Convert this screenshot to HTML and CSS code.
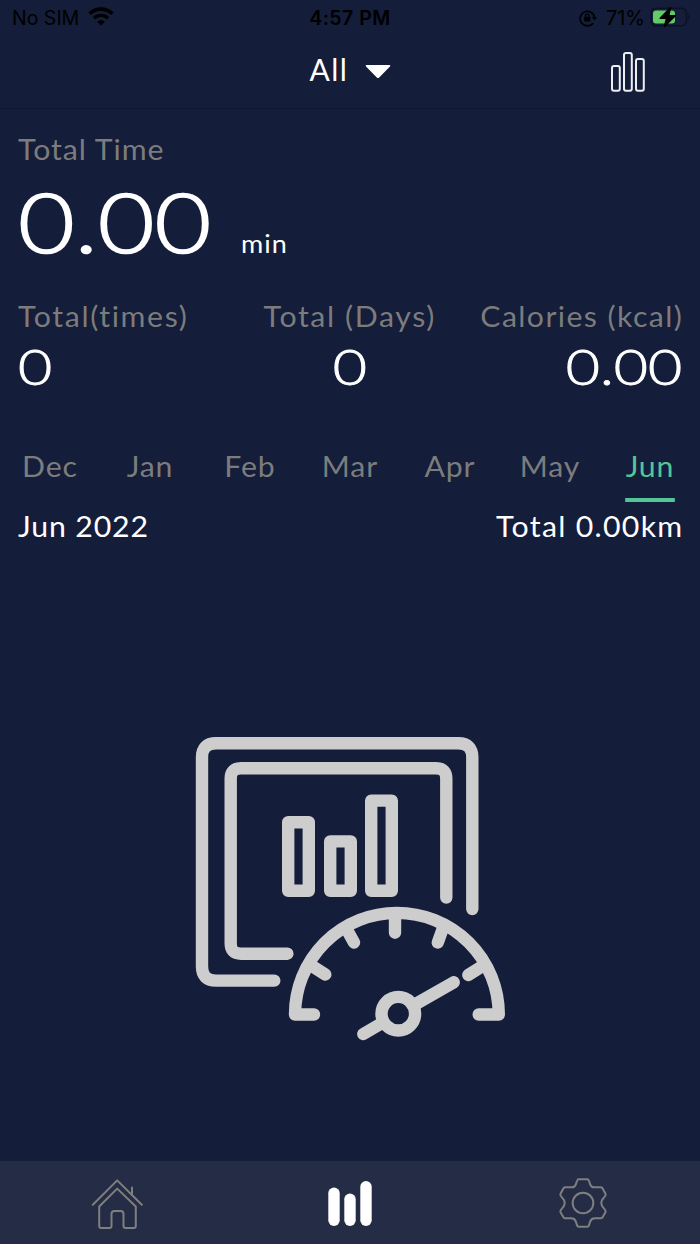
FILE: index.html
```html
<!DOCTYPE html>
<html lang="en">
<head>
    <meta charset="UTF-8">
    <meta name="viewport" content="width=device-width, initial-scale=1.0">
    <title>Workout Statistics</title>
    <link rel="stylesheet" href="styles.css">
</head>
<body>

    <div class="status-bar">
        <div class="status-left">
            <span class="carrier">No SIM</span>
            <svg class="wifi" width="26" height="19" viewBox="0 0 26 19">
                <path d="M1.6 6.8 C8 .6 18 .6 24.4 6.8" fill="none" stroke="#000" stroke-width="3.6"/>
                <path d="M6 11.2 C10 7.4 16 7.4 20 11.2" fill="none" stroke="#000" stroke-width="3.4"/>
                <path d="M9.2 14.8 C11.2 12.8 14.8 12.8 16.8 14.8 L13 18.6 Z"/>
            </svg>
        </div>
        <div class="clock">4:57 PM</div>
        <div class="status-right">
            <svg class="lock" width="18" height="18" viewBox="0 0 18 18">
                <path d="M14.2 14 A7.3 7.3 0 1 1 15.6 8.5" fill="none" stroke="#000" stroke-width="1.6"/>
                <path d="M12.8 8 H18 L15.5 11.6 Z"/>
                <rect x="5.2" y="7.8" width="6.2" height="4.8" rx="1"/>
                <path d="M6.5 8.5 V6.6 a1.8 1.8 0 0 1 3.6 0 V8.5" fill="none" stroke="#000" stroke-width="1.2"/>
            </svg>
            <span class="percent">71%</span>
            <svg class="battery" width="41" height="20" viewBox="0 0 41 20">
                <rect x="1" y="1.2" width="35.5" height="17.6" rx="5" fill="none" stroke="#0c1224" stroke-width="1.6"/>
                <path d="M38.4 7 q2.6 3 0 6 Z" fill="#0c1224"/>
                <rect x="3" y="3.4" width="22" height="13.2" rx="3" fill="#62cb66"/>
                <path d="M20.5 .6 L10.2 11.2 H16.5 L14.4 19.4 L25.4 8.8 H18.8 Z" stroke="#000" stroke-width="1.4" stroke-linejoin="round"/>
            </svg>
        </div>
    </div>

    <header class="header">
        <div class="filter">
            <span>All</span>
            <svg class="caret" width="26" height="14" viewBox="0 0 26 14"><path d="M1.5 0 H24.5 Q26 .4 25 1.6 L14.2 12.4 Q13 13.6 11.8 12.4 L1 1.6 Q0 .4 1.5 0 Z"/></svg>
        </div>
        <svg class="chart-button" width="36" height="42" viewBox="0 0 36 42">
            <rect x="2" y="15" width="7.8" height="24.8" rx="2"/>
            <rect x="14" y="2" width="7.8" height="37.8" rx="2"/>
            <rect x="26" y="8" width="7.8" height="31.8" rx="2"/>
        </svg>
    </header>

    <main>
        <section class="summary">
            <div class="label total-time">Total Time</div>
            <div class="time-row">
                <span class="time">0.00</span>
                <span class="unit">min</span>
            </div>
            <div class="stats">
                <div class="stat">
                    <div class="label">Total(times)</div>
                    <div class="value">0</div>
                </div>
                <div class="stat center">
                    <div class="label">Total (Days)</div>
                    <div class="value">0</div>
                </div>
                <div class="stat right">
                    <div class="label">Calories (kcal)</div>
                    <div class="value">0.00</div>
                </div>
            </div>
        </section>

        <nav class="months">
            <div class="month"><span>Dec</span></div>
            <div class="month"><span>Jan</span></div>
            <div class="month"><span>Feb</span></div>
            <div class="month"><span>Mar</span></div>
            <div class="month"><span>Apr</span></div>
            <div class="month"><span>May</span></div>
            <div class="month active"><span>Jun</span></div>
        </nav>

        <div class="month-total">
            <span class="month-name">Jun 2022</span>
            <span class="distance">Total 0.00km</span>
        </div>

        <div class="empty">
            <svg width="320" height="320" viewBox="190 730 320 320">
                <!-- screen -->
                <path d="M274.3 980.6 H216 Q202 980.6 202 966.6 V757.3 Q202 743.3 216 743.3 H458.3 Q472.3 743.3 472.3 757.3 V909"/>
                <path d="M287.4 953.7 H241 Q230.7 953.7 230.7 943.4 V778.6 Q230.7 768.3 241 768.3 H436 Q446.3 768.3 446.3 778.6 V897.5"/>
                <!-- bars -->
                <rect x="288.2" y="822.2" width="20.6" height="68.6"/>
                <rect x="330.2" y="841.4" width="20.6" height="49.4"/>
                <rect x="371.2" y="800.6" width="20.6" height="90.2"/>
                <!-- gauge -->
                <path d="M314 1014.5 H295 A101.9 101.7 0 0 1 498.8 1014.5 H478.7"/>
                <path d="M395 915 V932.7 M346 928 L354 942.5 M443 928 L437.8 942.5 M312 966 L325.3 974.5 M481 967 L468.3 975"/>
                <circle cx="398.3" cy="1013.7" r="16.8"/>
                <path d="M363.3 1034 L383 1022.5 M414 1005 L453.7 982.3"/>
            </svg>
        </div>
    </main>

    <nav class="tab-bar">
        <div class="tab">
            <svg class="line-icon" width="52" height="52" viewBox="0 0 52 52">
                <path d="M1.8 27.7 L26.2 3.4 L50.8 27.7"/>
                <path d="M41 18 V10.5"/>
                <path d="M8.2 29.5 L26.2 11.6 L44.8 29.5 V49 Q44.8 51 42.8 51 H34.5 Q32.5 51 32.5 49 V37 Q32.5 34 29.5 34 H23.5 Q20.5 34 20.5 37 V49 Q20.5 51 18.5 51 H10.2 Q8.2 51 8.2 49 Z"/>
            </svg>
        </div>
        <div class="tab">
            <svg class="bars" width="44" height="46" viewBox="0 0 44 46">
                <rect x="0.3" y="6.5" width="11.4" height="38.5" rx="5.7"/>
                <rect x="16.3" y="12.5" width="11.4" height="32.5" rx="5.7"/>
                <rect x="32.3" y="0" width="11.4" height="45" rx="5.7"/>
            </svg>
        </div>
        <div class="tab">
            <svg class="line-icon gear" width="50" height="50" viewBox="54.5 85 150 150">
                <path d="M117 89 H142 Q146 89 147.5 94 L151 104 Q154 113 163 113 H182 Q186 113 188 116 L197 132 Q198 136 196 139 L188 149 Q181 160 188 171 L196 181 Q198 184 197 188 L188 203 Q186 206 182 206 H165 Q154 206 151 216 L147 228 Q146 231 142 231 H117 Q113 231 112 228 L108 216 Q105 206 94 206 H77 Q73 206 71 203 L62 188 Q61 184 63 181 L71 171 Q78 160 71 149 L63 139 Q61 136 62 132 L71 116 Q73 113 77 113 H96 Q105 113 108 104 L111.5 94 Q113 89 117 89 Z"/>
                <circle cx="129.5" cy="160" r="31"/>
            </svg>
        </div>
    </nav>

</body>
</html>
```
FILE: styles.css
```css
* {
    margin: 0;
    padding: 0;
    box-sizing: border-box;
}

body {
    height: 1244px;
    display: flex;
    flex-direction: column;
    overflow: hidden;
    font-family: Lato, sans-serif;
    font-size: 28px;
    line-height: 40px;
    white-space: nowrap;
    background-color: #141d39;
    color: #fff;
}

svg {
    display: block;
    flex: none;
}

.status-bar {
    height: 36px;
    padding: 0 9px 0 12px;
    display: grid;
    grid-template-columns: 1fr auto 1fr;
    font-family: Inter, sans-serif;
    font-size: 19.5px;
    line-height: 36px;
    color: #000;
}

.status-left,
.status-right {
    display: flex;
    align-items: center;
}

.status-left {
    gap: 9px;
}

.wifi {
    margin-top: -3px;
}

.clock {
    margin-left: -3px;
    font-weight: 600;
    letter-spacing: 0.5px;
}

.status-right {
    justify-content: flex-end;
}

.percent {
    margin: 0 5px 0 9px;
    font-size: 20px;
}

.battery {
    margin-top: -2px;
}

.header {
    height: 73px;
    display: grid;
    grid-template-columns: 1fr auto 1fr;
    border-bottom: 1px solid #10182f;
}

.filter {
    grid-column: 2;
    height: 66px;
    display: flex;
    align-items: center;
    gap: 17px;
    margin-left: 1px;
    font-size: 30px;
    letter-spacing: 1.5px;
}

.caret {
    margin-top: 5px;
    fill: #fff;
}

.chart-button {
    justify-self: end;
    margin: 15px 54px 0 0;
    fill: none;
    stroke: #eceef2;
    stroke-width: 2;
}

main {
    flex: 1;
}

.summary {
    padding: 20px 18px 0;
}

.label {
    color: #7c7c7d;
    letter-spacing: 1.5px;
    transform: scaleX(1.08);
    transform-origin: left;
}

.total-time {
    letter-spacing: 0.9px;
}

.time-row {
    display: flex;
    align-items: baseline;
    height: 84px;
    margin: 10px 0 33px;
}

.time {
    width: 223px;
    font-size: 83px;
    font-weight: 300;
    line-height: 84px;
    -webkit-text-stroke: 1.6px #fff;
    transform: scaleX(1.18);
    transform-origin: left;
}

.unit {
    font-size: 25px;
    letter-spacing: 1px;
    transform: scaleX(1.08);
    transform-origin: left;
}

.stats {
    display: grid;
    grid-template-columns: 1fr auto 1fr;
}

.value {
    margin-top: 5px;
    font-size: 50px;
    font-weight: 300;
    line-height: 50px;
    -webkit-text-stroke: 0.9px #fff;
    transform: scaleX(1.18);
    transform-origin: left;
}

.center {
    text-align: center;
}

.center .label,
.center .value {
    transform-origin: center;
}

.right {
    text-align: right;
}

.right .label,
.right .value {
    transform-origin: right;
}

.right .label {
    margin-right: -1px;
    letter-spacing: 1.3px;
}

.months {
    display: grid;
    grid-template-columns: repeat(7, 1fr);
    margin-top: 55px;
}

.month {
    height: 56px;
    display: flex;
    justify-content: center;
    color: #7c7c7d;
    letter-spacing: 0.8px;
    transform: scaleX(1.08);
}

.active span {
    color: #53c596;
    border-bottom: 4px solid #53c596;
}

.month-total {
    display: flex;
    justify-content: space-between;
    padding: 4px 18px 0;
}

.month-name {
    letter-spacing: 0.8px;
    transform: scaleX(1.08);
    transform-origin: left;
}

.distance {
    margin-right: -1px;
    letter-spacing: 1.2px;
    transform: scaleX(1.08);
    transform-origin: right;
}

.empty {
    display: flex;
    justify-content: center;
    margin-top: 184px;
}

.empty svg {
    fill: none;
    stroke: #cdcdcd;
    stroke-width: 12.4;
    stroke-linecap: round;
    stroke-linejoin: round;
}

.tab-bar {
    height: 83px;
    display: grid;
    grid-template-columns: repeat(3, 1fr);
    background-color: #242d45;
}

.tab {
    display: flex;
    align-items: center;
    justify-content: center;
}

.bars {
    margin-top: 2px;
    fill: #fff;
}

.line-icon {
    fill: none;
    stroke: #7f7f80;
    stroke-width: 2;
    stroke-linecap: round;
    stroke-linejoin: round;
}

.gear {
    stroke-width: 6;
}
```
